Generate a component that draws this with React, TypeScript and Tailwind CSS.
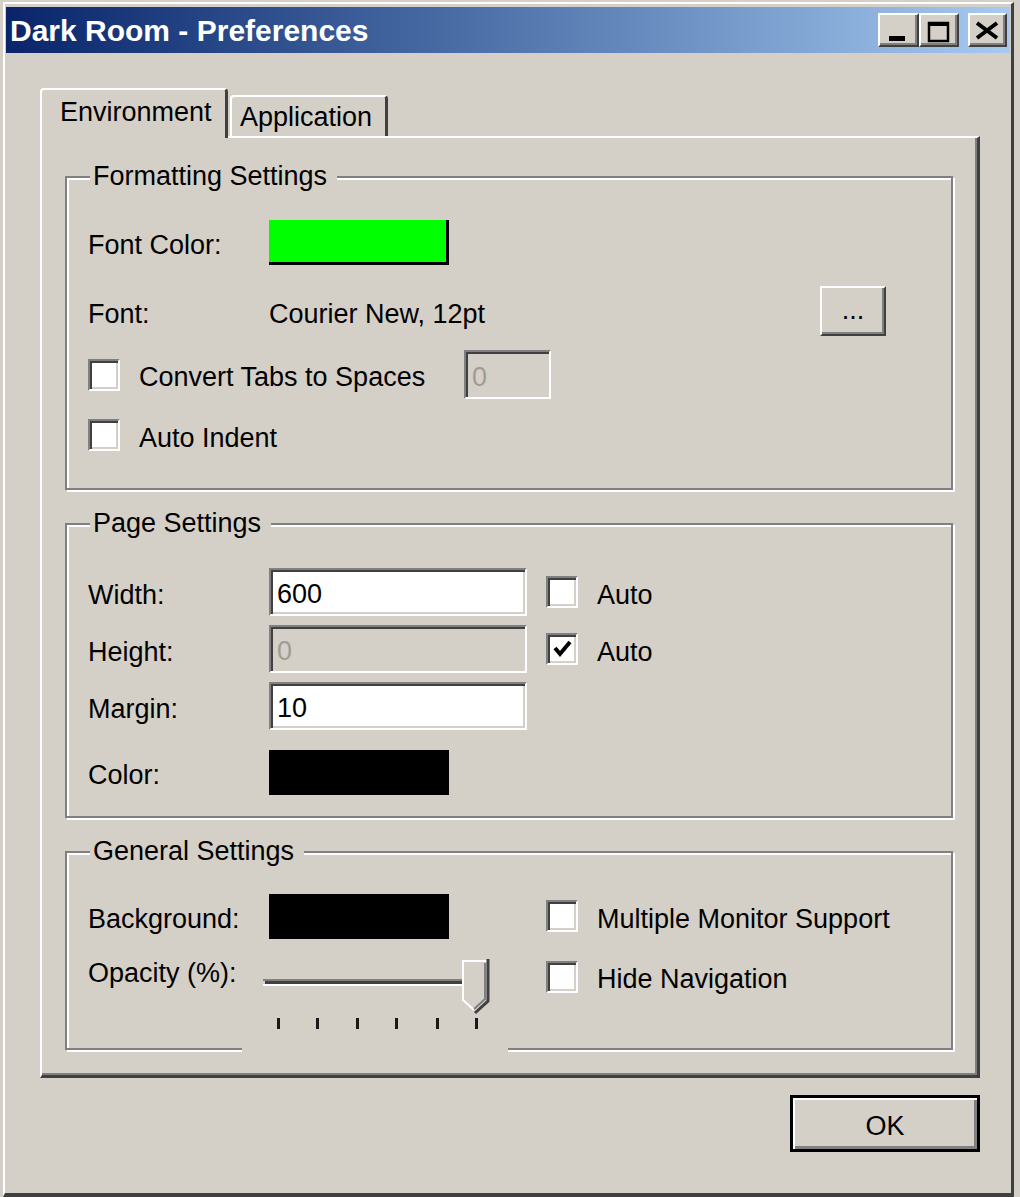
import React from 'react';

const raised =
  'border-2 border-t-white border-l-white border-r-[#404040] border-b-[#404040] shadow-[inset_-2px_-2px_0_#808080]';
const sunken =
  'border-2 border-t-[#808080] border-l-[#808080] border-r-white border-b-white shadow-[inset_2px_2px_0_#404040,inset_-2px_-2px_0_#d4d0c8]';

const Text = ({ className, children }: { className?: string; children: React.ReactNode }) => (
  <span className={`pt-[6px] ${className ?? ''}`}>{children}</span>
);

const CheckBox = ({ checked }: { checked?: boolean }) => (
  <div className={`w-[32px] h-[32px] shrink-0 bg-white flex items-center justify-center ${sunken}`}>
    {checked && (
      <svg width="22" height="22" viewBox="0 0 22 22">
        <polyline points="4,10 9,16 19,4" fill="none" stroke="#000" strokeWidth="4" />
      </svg>
    )}
  </div>
);

const Group = ({ title, className, children }: { title: string; className?: string; children: React.ReactNode }) => (
  <fieldset
    className={`border-2 border-[#808080] shadow-[inset_2px_2px_0_#fff,2px_2px_0_#fff] pl-[21px] ${className ?? ''}`}
  >
    <legend className="ml-[2px] pl-[3px] pr-[10px] leading-[31px] bg-[#d4d0c8]">{title}</legend>
    {children}
  </fieldset>
);

const Swatch = ({ color }: { color: string }) => (
  <div className="w-[180px] h-[45px] border-r-[3px] border-b-[3px] border-black" style={{ background: color }} />
);

const TextBox = ({ value, disabled }: { value: string; disabled?: boolean }) => (
  <div
    className={`w-[258px] h-[48px] flex items-center pl-[6px] pt-[5px] ${sunken} ${
      disabled ? 'bg-[#d4d0c8] text-[#a09c94]' : 'bg-white'
    }`}
  >
    {value}
  </div>
);

const Slider = () => (
  <div className="w-[266px] h-[108px] -mb-[5px] bg-[#d4d0c8]">
    <svg width="266" height="108" className="block">
      <rect x="21" y="34" width="212" height="2" fill="#808080" />
      <rect x="23" y="36" width="210" height="3" fill="#404040" />
      <rect x="21" y="39" width="214" height="2" fill="#fff" />
      {[36, 75, 115, 154, 195, 234].map((x) => (
        <rect key={x} x={x - 1} y="73" width="3" height="11" fill="#1a1a1a" />
      ))}
      <polygon points="220,15 246,15 246,55 233,67 220,55" fill="#d4d0c8" />
      <polyline points="221,56 221,16 245,16" fill="none" stroke="#fff" strokeWidth="2" />
      <polyline points="221,55 232,65" fill="none" stroke="#fff" strokeWidth="2" />
      <polyline points="243,18 243,54 232,64" fill="none" stroke="#808080" strokeWidth="2" />
      <polyline points="246,14 246,56 233,68" fill="none" stroke="#404040" strokeWidth="3" />
    </svg>
  </div>
);

const TitleButton = ({ w, children, className }: { w: string; children: React.ReactNode; className?: string }) => (
  <div className={`${w} h-[34px] bg-[#d4d0c8] ${raised} ${className ?? ''}`}>
    <svg width="100%" height="100%" className="block">
      {children}
    </svg>
  </div>
);

export default function App() {
  return (
    <div className="w-[1020px] h-[1197px] overflow-hidden bg-[#d4d0c8] pt-[2px] pl-[3px] pr-[6px] font-['Liberation_Sans',Arial,sans-serif] text-[27px] leading-[31px] text-black">
      <div className="h-full flex flex-col border-l-2 border-t-2 border-r-[3px] border-b-[4px] border-l-white border-t-white border-r-[#404040] border-b-[#404040] px-[1px] pt-[3px]">
        {/* title bar */}
        <div className="h-[46px] shrink-0 flex items-center pl-[4px] pr-[3px] bg-gradient-to-r from-[#0a246a] to-[#a6caf0]">
          <span className="flex-1 text-white font-bold text-[30px]">Dark Room - Preferences</span>
          <TitleButton w="w-[41px]">
            <rect x="9" y="21" width="16" height="5" fill="#000" />
          </TitleButton>
          <TitleButton w="w-[40px]">
            <rect x="8" y="8" width="19" height="18" fill="none" stroke="#000" strokeWidth="2.5" />
            <rect x="8" y="7" width="19" height="4" fill="#000" />
          </TitleButton>
          <TitleButton w="w-[39px]" className="ml-[9px]">
            <path d="M7 8 L27 23 M27 8 L7 23" stroke="#000" strokeWidth="4" />
          </TitleButton>
        </div>

        <div className="flex-1 pl-[34px]">
          {/* tabs */}
          <div className="relative z-10 flex items-end h-[48px] mt-[35px]">
            <div className="w-[188px] h-[50px] -mb-[2px] bg-[#d4d0c8] border-l-2 border-t-2 border-r-[3px] border-l-white border-t-white border-r-[#404040] rounded-t-[4px] flex items-center pl-[18px] pb-[4px]">
              Environment
            </div>
            <div className="w-[158px] h-[41px] ml-[2px] border-l-2 border-t-2 border-r-[3px] border-l-white border-t-white border-r-[#404040] rounded-t-[4px] flex items-center pl-[8px] pt-[2px]">
              Application
            </div>
          </div>

          {/* panel */}
          <div className="w-[940px] border-l-2 border-t-2 border-r-[3px] border-b-[3px] border-l-white border-t-white border-r-[#404040] border-b-[#404040] shadow-[inset_-2px_-2px_0_#808080] pl-[23px] pr-[24px] pt-[23px] pb-[25px]">
            <Group title="Formatting Settings" className="pt-[28px] pb-[36px]">
              <div className="flex items-center h-[45px]">
                <Text className="w-[181px]">Font Color:</Text>
                <Swatch color="#00ff00" />
              </div>
              <div className="flex items-center h-[50px] mt-[21px]">
                <Text className="w-[181px]">Font:</Text>
                <Text className="w-[551px]">Courier New, 12pt</Text>
                <div className={`w-[66px] h-[50px] flex items-end justify-center pb-[8px] ${raised}`}>...</div>
              </div>
              <div className="flex items-center h-[49px] mt-[14px]">
                <CheckBox />
                <Text className="w-[325px] ml-[19px]">Convert Tabs to Spaces</Text>
                <div className={`w-[87px] h-[49px] flex items-center pl-[6px] pt-[5px] bg-[#d4d0c8] text-[#a09c94] ${sunken}`}>0</div>
              </div>
              <div className="flex items-center h-[34px] mt-[19px]">
                <CheckBox />
                <Text className="ml-[19px]">Auto Indent</Text>
              </div>
            </Group>

            <Group title="Page Settings" className="mt-[18px] pt-[29px] pb-[21px]">
              <div className="flex items-center h-[48px]">
                <Text className="w-[181px]">Width:</Text>
                <TextBox value="600" />
                <div className="ml-[19px]"><CheckBox /></div>
                <Text className="ml-[19px]">Auto</Text>
              </div>
              <div className="flex items-center h-[48px] mt-[9px]">
                <Text className="w-[181px]">Height:</Text>
                <TextBox value="0" disabled />
                <div className="ml-[19px]"><CheckBox checked /></div>
                <Text className="ml-[19px]">Auto</Text>
              </div>
              <div className="flex items-center h-[48px] mt-[9px]">
                <Text className="w-[181px]">Margin:</Text>
                <TextBox value="10" />
              </div>
              <div className="flex items-center h-[45px] mt-[20px]">
                <Text className="w-[181px]">Color:</Text>
                <Swatch color="#000000" />
              </div>
            </Group>

            <Group title="General Settings" className="mt-[18px] pt-[27px] pb-0">
              <div className="flex items-center h-[44px]">
                <div className="w-[458px] flex items-center">
                  <Text className="w-[181px]">Background:</Text>
                  <Swatch color="#000000" />
                </div>
                <CheckBox />
                <Text className="ml-[19px]">Multiple Monitor Support</Text>
              </div>
              <div className="flex items-start mt-[7px]">
                <div className="w-[458px] flex items-start">
                  <span className="w-[154px] pt-[13px]">Opacity (%):</span>
                  <Slider />
                </div>
                <div className="flex items-center mt-[13px]">
                  <CheckBox />
                  <Text className="ml-[19px]">Hide Navigation</Text>
                </div>
              </div>
            </Group>
          </div>

          {/* footer */}
          <div className="w-[940px] flex justify-end mt-[17px]">
            <div className="w-[190px] h-[57px] pt-[5px] border-[3px] border-black shadow-[inset_2px_2px_0_#fff,inset_-3px_-3px_0_#808080] flex items-center justify-center">
              OK
            </div>
          </div>
        </div>
      </div>
    </div>
  );
}
